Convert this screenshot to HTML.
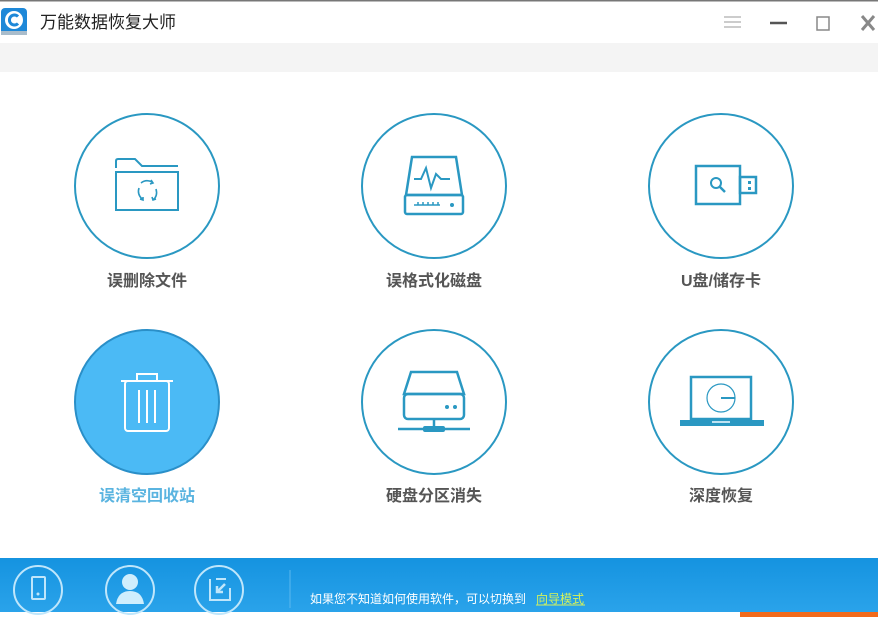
<!DOCTYPE html>
<html><head><meta charset="utf-8"><style>
body{margin:0;width:878px;height:617px;overflow:hidden;background:#fff;font-family:"Liberation Sans","Noto Sans CJK SC",sans-serif;position:relative}
</style></head><body>
<svg width="878" height="617" viewBox="0 0 878 617" style="position:absolute;left:0;top:0">
<rect x="0" y="0" width="878" height="1.5" fill="#777"/>
<!-- logo -->
<rect x="1" y="8" width="26" height="27" rx="4" fill="#1e88d8"/>
<rect x="1" y="31" width="26" height="4" fill="#a9bccb"/>
<circle cx="14" cy="20" r="9" fill="#fff"/>
<path d="M18 16.5 A5 5 0 1 0 18 23.5" fill="none" stroke="#1e88d8" stroke-width="3"/>
<text x="40" y="28" font-size="17" fill="#222" font-family="Liberation Sans,Noto Sans CJK SC,sans-serif">万能数据恢复大师</text>
<!-- window controls -->
<g stroke="#bbb" stroke-width="1.5"><line x1="724" y1="17" x2="741" y2="17"/><line x1="724" y1="22" x2="741" y2="22"/><line x1="724" y1="27" x2="741" y2="27"/></g>
<line x1="770" y1="23" x2="787" y2="23" stroke="#555" stroke-width="2.5"/>
<rect x="817" y="17" width="12" height="13" fill="none" stroke="#888" stroke-width="1.5"/>
<g stroke="#888" stroke-width="3"><line x1="862" y1="16" x2="874" y2="30"/><line x1="874" y1="16" x2="862" y2="30"/></g>
<rect x="0" y="43" width="878" height="29" fill="#f4f4f4"/>

<!-- circles -->
<g fill="none" stroke="#2a98c2" stroke-width="2">
<circle cx="147" cy="186" r="72"/>
<circle cx="434" cy="186" r="72"/>
<circle cx="721" cy="186" r="72"/>
<circle cx="434" cy="402" r="72"/>
<circle cx="721" cy="402" r="72"/>
</g>
<circle cx="147" cy="402" r="72" fill="#4bbaf5" stroke="#2a8fc8" stroke-width="2"/>

<!-- folder -->
<g fill="none" stroke="#2a98c2" stroke-width="2">
<path d="M116 168 V161 Q116 159 118 159 H135 L142 166 H178"/>
<rect x="116" y="172" width="62" height="38"/>
<path d="M141 183 q5 -4 11 -1 M151 180 l2 3 l-3 1" stroke-width="1.6"/>
<path d="M139 188 q-2 6 3 11 M140 199 l3 1 l0 -3" stroke-width="1.6"/>
<path d="M156 189 q2 7 -3 11 M152 197 l1 3 l3 -1" stroke-width="1.6"/>
</g>
<!-- hard disk -->
<g fill="none" stroke="#2a98c2" stroke-width="2.5">
<path d="M412 157 H456 L462 195 H406 Z"/>
<rect x="405" y="195" width="58" height="19" rx="2"/>
<path d="M414 179 H421 L426 168 L431 188 L436 174 L441 179 H450" stroke-width="2"/>
<path d="M414 205 H440 M418 205 v-3 M423 205 v-3 M428 205 v-3 M433 205 v-3 M438 205 v-3" stroke-width="1.5"/>
</g>
<circle cx="452" cy="205" r="2" fill="#2a98c2"/>
<!-- usb -->
<g fill="none" stroke="#2a98c2" stroke-width="2.5">
<rect x="696" y="166" width="44" height="38"/>
<rect x="740" y="177" width="16" height="16"/>
<circle cx="716" cy="183" r="5" stroke-width="2"/>
<line x1="720" y1="187" x2="725" y2="192" stroke-width="2.5"/>
</g>
<rect x="748" y="181" width="3" height="3" fill="#2a98c2"/><rect x="748" y="187" width="3" height="3" fill="#2a98c2"/>
<!-- trash -->
<g fill="none" stroke="#fff" stroke-width="2">
<rect x="125" y="381" width="44" height="50" rx="3"/>
<path d="M121 381 H173 M137 381 v-7 h20 v7"/>
<line x1="139" y1="390" x2="139" y2="423"/><line x1="147" y1="390" x2="147" y2="423"/><line x1="155" y1="390" x2="155" y2="423"/>
</g>
<!-- server -->
<g fill="none" stroke="#2a98c2" stroke-width="2.5">
<path d="M411 372 H457 L464 394 H404 Z"/>
<rect x="404" y="394" width="60" height="25" rx="4"/>
<line x1="434" y1="419" x2="434" y2="427"/>
<line x1="398" y1="429" x2="470" y2="429"/>
</g>
<rect x="423" y="426" width="22" height="6" rx="2" fill="#2a98c2"/>
<circle cx="447" cy="407" r="2" fill="#2a98c2"/><circle cx="455" cy="407" r="2" fill="#2a98c2"/>
<!-- laptop -->
<g fill="none" stroke="#2a98c2" stroke-width="2.5">
<rect x="691" y="377" width="60" height="42"/>
</g>
<rect x="680" y="420" width="84" height="6" fill="#2a98c2"/>
<rect x="712" y="421" width="18" height="2" fill="#bfe3f2"/>
<circle cx="721" cy="398" r="14" fill="none" stroke="#2a98c2" stroke-width="1.2"/>
<line x1="721" y1="398" x2="735" y2="398" stroke="#2a98c2" stroke-width="2"/>

<!-- labels -->
<g font-size="16" font-weight="bold" text-anchor="middle" fill="#555" font-family="Liberation Sans,Noto Sans CJK SC,sans-serif">
<text x="147" y="286">误删除文件</text>
<text x="434" y="286">误格式化磁盘</text>
<text x="721" y="286">U盘/储存卡</text>
<text x="147" y="501" fill="#5ab4e0">误清空回收站</text>
<text x="434" y="501">硬盘分区消失</text>
<text x="721" y="501">深度恢复</text>
</g>

<!-- footer -->
<defs><linearGradient id="fg" x1="0" y1="0" x2="0" y2="1"><stop offset="0" stop-color="#1593e0"/><stop offset="1" stop-color="#2aa3ea"/></linearGradient></defs>
<rect x="0" y="558" width="878" height="54" fill="url(#fg)"/>
<g fill="none" stroke="#bfe6fb" stroke-width="2">
<circle cx="38" cy="590" r="24"/><circle cx="130" cy="590" r="24"/><circle cx="219" cy="590" r="24"/>
<rect x="32" y="577" width="13" height="22" rx="1"/>
<path d="M210 579 v21 h20 v-12 M216 579 h10"/>
<path d="M225 584 l-8 8 M217 586 v6 h6" stroke-width="2.5"/>
</g>
<circle cx="38" cy="594" r="1.5" fill="#bfe6fb"/>
<circle cx="130" cy="582" r="8" fill="#cfeefd"/>
<path d="M116 604 q2 -13 14 -13 q12 0 14 13 Z" fill="#cfeefd"/>
<line x1="290" y1="570" x2="290" y2="608" stroke="#5bb8ee" stroke-width="1"/>
<text x="310" y="603" font-size="12" fill="#fff" font-family="Liberation Sans,Noto Sans CJK SC,sans-serif">如果您不知道如何使用软件，可以切换到</text>
<text x="536" y="603" font-size="12" fill="#d6f25a" font-family="Liberation Sans,Noto Sans CJK SC,sans-serif">向导模式</text>
<line x1="536" y1="605" x2="585" y2="605" stroke="#d6f25a" stroke-width="1"/>
<rect x="740" y="612" width="138" height="5" fill="#f26a1b"/>
</svg>
</body></html>
